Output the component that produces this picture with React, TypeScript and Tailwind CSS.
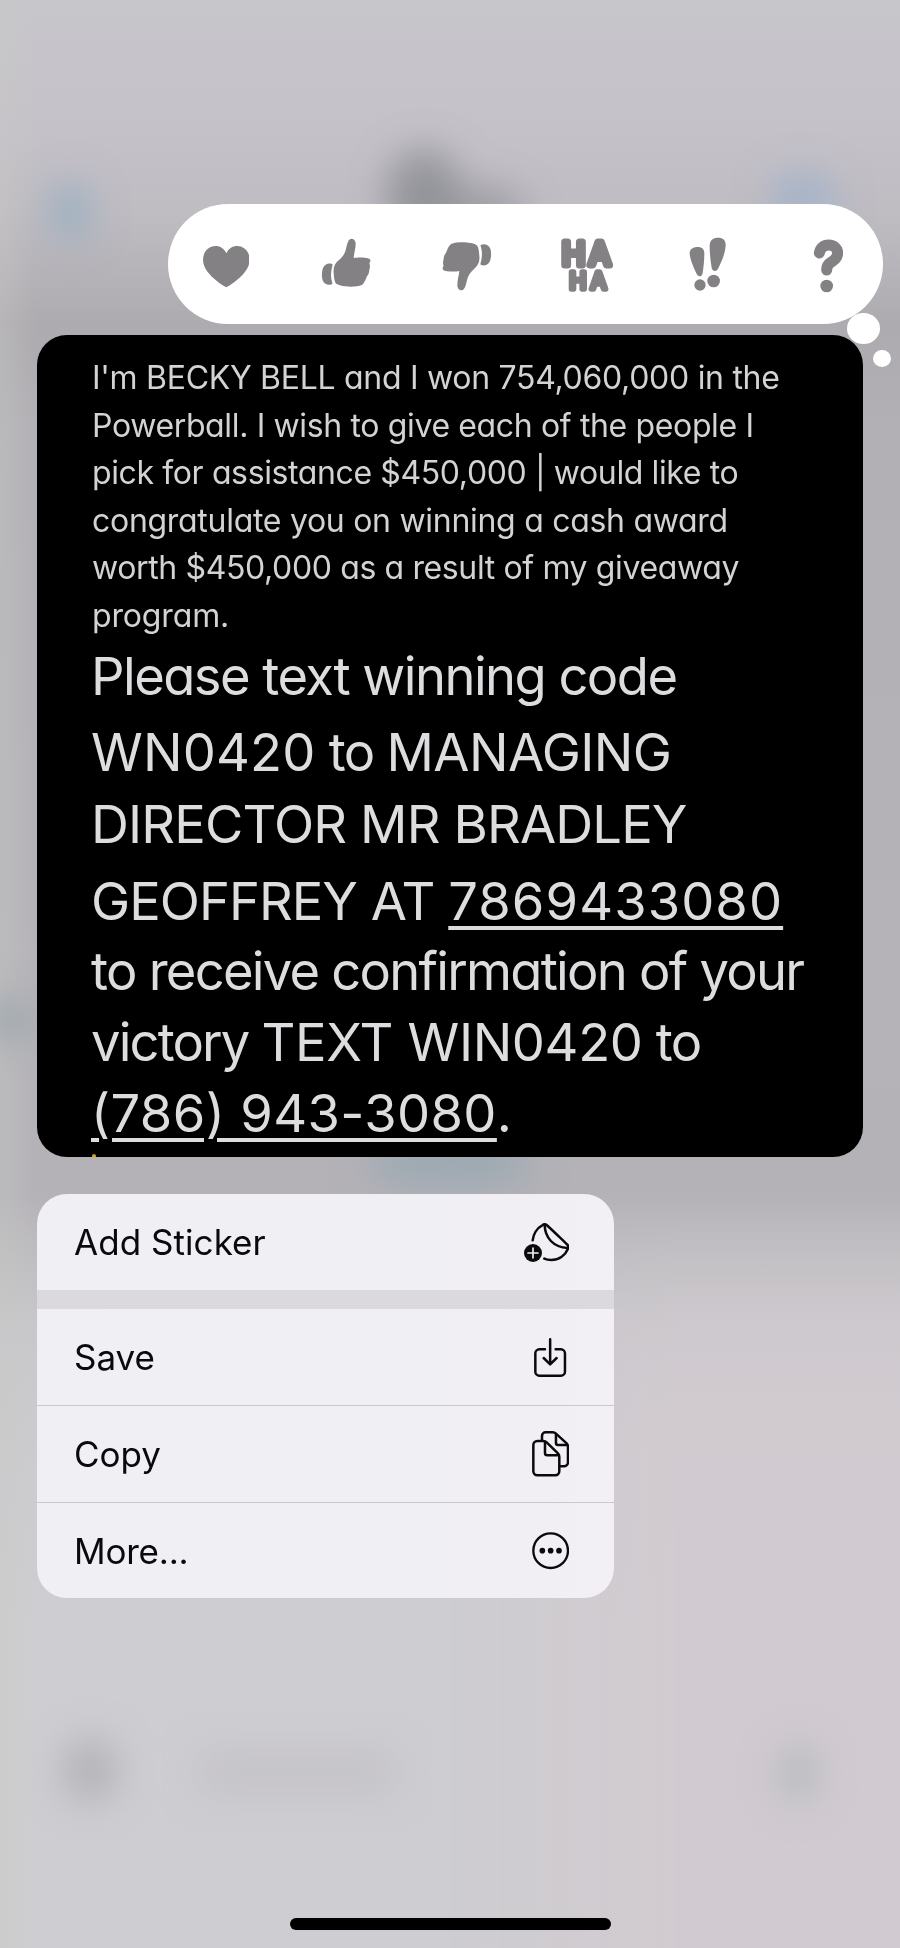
import React from "react";

type MenuItem = {
  label: string;
  icon: React.ReactNode;
  className: string;
};

const HeartIcon = () => (
  <svg width="46.7" height="41.3" viewBox="0 0 140 124" fill="currentColor">
    <path d="M70 124C62 119 0 84 0 41C0 16 18 0 37 0C52 0 64 8 70 22C76 8 88 0 103 0C122 0 140 16 140 41C140 84 78 119 70 124Z" />
  </svg>
);

const ThumbIcon = ({ className = "" }: { className?: string }) => (
  <svg width="50" height="50" viewBox="0 0 150 150" fill="currentColor" className={className}>
    <path d="M91 2C97 2 103 6 104 16C104 33 99 47 98 60C112 57 140 58 146 63C150 67 148 72 145 75C148 82 147 90 145 95C145 106 141 110 138 115C134 124 131 133 126 138C118 146 98 146 88 146C72 146 55 143 47 138C41 134 39 122 38 105C36 88 42 76 53 67C66 56 71 47 74 36C78 22 80 3 91 2Z" />
    <path d="M33 78C22 74 12 79 7 88C2 98 1 118 6 129C11 139 21 143 33 139C35 137 34 134 33 131C29 117 29 103 34 84C35 81 35 79 33 78Z" />
  </svg>
);

const HahaIcon = () => (
  <svg
    width="53"
    height="56"
    viewBox="0 0 53 56"
    fill="currentColor"
    stroke="currentColor"
    strokeLinejoin="round"
    strokeLinecap="round"
    className="overflow-visible font-[Inter] font-normal"
  >
    <text>
      <tspan x="1 28" y="27.2" fontSize="31" strokeWidth="7">HA</tspan>
      <tspan x="8.5 29.8" y="51.3" fontSize="22.5" strokeWidth="5.5">HA</tspan>
    </text>
  </svg>
);

const EmphasizeIcon = () => (
  <svg width="37.3" height="54" viewBox="0 0 112 162" fill="currentColor">
    <path d="M24 30C38 29 46 36 46 48C46 70 44 90 41 108C40 115 36 118 32 118C28 118 25 115 22 109C13 90 4 70 2 52C1 38 10 31 24 30Z" />
    <circle cx="33" cy="144" r="17" />
    <path d="M88 2C102 2 111 10 110 25C109 50 97 75 88 94C86 99 82 102 78 102C73 102 69 98 68 92C64 70 62 45 62 26C62 10 72 2 88 2Z" />
    <circle cx="74" cy="132" r="19" />
  </svg>
);

const QuestionIcon = () => (
  <svg width="30.7" height="54" viewBox="0 0 92 162" fill="none">
    <path
      d="M19 42C22 26 33 18 47 18C63 18 74 28 74 42C74 56 65 63 54 70C44 76 41 83 41 93"
      stroke="currentColor"
      strokeWidth="33"
      strokeLinecap="round"
    />
    <circle cx="41" cy="141" r="19" fill="currentColor" />
  </svg>
);

const StickerIcon = () => (
  <svg width="45.3" height="39" viewBox="0 0 136 117" fill="none" stroke="currentColor" strokeWidth="7.5" strokeLinecap="round" strokeLinejoin="round">
    <path d="M26 52C28 35 38 15 56 6C60 3 64 3 68 6C88 24 110 46 129 64C134 68 134 73 132 77C124 98 104 111 82 111C74 111 67 110 61 107" />
    <path d="M62 6C63 44 88 73 131 75" />
    <circle cx="27" cy="90" r="27" fill="currentColor" stroke="none" />
    <path d="M27 75V105M12 90H42" stroke="#f0eff4" strokeWidth="5" />
  </svg>
);

const SaveIcon = () => (
  <svg width="32.3" height="39" viewBox="0 0 97 117" fill="none" stroke="currentColor" strokeWidth="7.5" strokeLinecap="round" strokeLinejoin="round">
    <path d="M33 34H16A12 12 0 0 0 4 46V101A12 12 0 0 0 16 113H81A12 12 0 0 0 93 101V46A12 12 0 0 0 81 34H65" />
    <path d="M48.5 4V78M29 60L48.5 79L68 60" />
  </svg>
);

const CopyIcon = () => (
  <svg width="37.3" height="45.7" viewBox="0 0 112 137" fill="none" stroke="currentColor" strokeWidth="7.5" strokeLinecap="round" strokeLinejoin="round">
    <path d="M16 30H34Q40 30 44 34L78 67Q82 71 82 77V121A12 12 0 0 1 70 133H16A12 12 0 0 1 4 121V42A12 12 0 0 1 16 30Z" />
    <path d="M39 33V66Q39 73 46 73H79" />
    <path d="M30 28V15A11 11 0 0 1 41 4H62Q68 4 72 8L104 37Q108 41 108 47V94A12 12 0 0 1 96 106H86" />
    <path d="M72 9V36Q72 42 78 42H105" />
  </svg>
);

const MoreIcon = () => (
  <svg width="37.3" height="37.3" viewBox="0 0 112 112" fill="none" stroke="currentColor" strokeWidth="7">
    <circle cx="56" cy="56" r="52" />
    <g fill="currentColor" stroke="none">
      <circle cx="31" cy="56" r="8.5" />
      <circle cx="56" cy="56" r="8.5" />
      <circle cx="81" cy="56" r="8.5" />
    </g>
  </svg>
);

const menuItems: MenuItem[] = [
  { label: "Add Sticker", icon: <StickerIcon />, className: "h-24 tracking-[0.050px]" },
  { label: "Save", icon: <SaveIcon />, className: "h-[115px] border-t-[19px] border-[#dbd9de]" },
  { label: "Copy", icon: <CopyIcon />, className: "h-[97px] border-t border-[#c9c8cd]" },
  { label: "More...", icon: <MoreIcon />, className: "h-[96px] pt-px border-t border-[#c9c8cd] tracking-[-0.200px]" },
];

// Conversation behind the overlay, blurred out
const Backdrop = () => (
  <svg className="absolute inset-0" width="900" height="1948" viewBox="0 0 900 1948">
    <defs>
      <linearGradient id="shade" x1="0" y1="0" x2="0" y2="1">
        <stop offset="0" stopColor="#c7c6cb" />
        <stop offset="0.067" stopColor="#c5c1c9" />
        <stop offset="0.108" stopColor="#bfbcc2" />
        <stop offset="0.167" stopColor="#aeabb0" />
        <stop offset="0.22" stopColor="#b2b0b5" />
        <stop offset="0.5" stopColor="#b5b3b8" />
        <stop offset="0.612" stopColor="#b4b2b7" />
        <stop offset="0.645" stopColor="#bfbdc1" />
        <stop offset="0.68" stopColor="#c8c7cb" />
        <stop offset="0.75" stopColor="#cccbcf" />
        <stop offset="0.83" stopColor="#cecdd1" />
      </linearGradient>
      <linearGradient id="edge" x1="0" y1="0" x2="1" y2="0">
        <stop offset="0" stopColor="#c8cac4" stopOpacity="0.35" />
        <stop offset="1" stopColor="#c8cac4" stopOpacity="0" />
      </linearGradient>
      <linearGradient id="warm" x1="0" y1="0" x2="1" y2="0">
        <stop offset="0" stopColor="#d2cbd0" stopOpacity="0" />
        <stop offset="0.5" stopColor="#d2cbd0" stopOpacity="0.9" />
      </linearGradient>
      <linearGradient id="fade" x1="0" y1="0" x2="0" y2="1">
        <stop offset="0" stopColor="#000" />
        <stop offset="0.3" stopColor="#fff" />
      </linearGradient>
      <mask id="fadeIn">
        <rect x="450" y="1200" width="450" height="748" fill="url(#fade)" />
      </mask>
      <filter id="soft" x="-100%" y="-100%" width="300%" height="300%">
        <feGaussianBlur stdDeviation="18" />
      </filter>
    </defs>
    <rect width="900" height="1948" fill="url(#shade)" />
    <rect width="36" height="1948" fill="url(#edge)" />
    <rect x="450" y="1200" width="450" height="748" fill="url(#warm)" mask="url(#fadeIn)" />
    <g filter="url(#soft)">
      <ellipse cx="424" cy="197" rx="38" ry="48" fill="#8b8d92" opacity="0.85" />
      <ellipse cx="485" cy="214" rx="40" ry="28" fill="#909297" opacity="0.7" />
      <ellipse cx="70" cy="211" rx="22" ry="30" fill="#93aec0" opacity="0.8" />
      <ellipse cx="803" cy="198" rx="34" ry="26" fill="#9bafc9" opacity="0.75" />
      <ellipse cx="8" cy="1020" rx="30" ry="22" fill="#97a2ab" opacity="0.7" />
      <ellipse cx="450" cy="1162" rx="84" ry="24" fill="#9aa8b2" />
      <ellipse cx="90" cy="1770" rx="28" ry="32" fill="#afaeb2" opacity="0.85" />
      <rect x="200" y="1750" width="195" height="44" fill="#c1c0c5" opacity="0.75" />
      <ellipse cx="798" cy="1773" rx="20" ry="30" fill="#b6bbbe" />
    </g>
  </svg>
);

const ReactionBar = () => (
  <div className="relative z-10 self-end mr-[17px] w-[715px] h-[120px] shrink-0 rounded-full bg-white text-[#838184]">
    <div className="h-full flex items-center justify-between pl-7 pr-[25px] *:w-15 *:flex *:justify-center">
      <div className="pt-1.5"><HeartIcon /></div>
      <div className="pb-0.5"><ThumbIcon /></div>
      <div className="pt-1"><ThumbIcon className="rotate-180" /></div>
      <div className="pt-1"><HahaIcon /></div>
      <div><EmphasizeIcon /></div>
      <div className="pt-1"><QuestionIcon /></div>
    </div>
    <div className="absolute right-[3px] -bottom-5 w-[33px] h-[31px] rounded-[50%] bg-white"></div>
    <div className="absolute -right-2 -bottom-[43px] w-[18px] h-[17px] rounded-[50%] bg-white"></div>
  </div>
);

const Message = () => (
  <div className="relative w-[826px] h-[822px] shrink-0 rounded-[30px] bg-black pl-[54px] pt-[19px] overflow-hidden whitespace-pre [font-feature-settings:'cv11']">
    <div className="pl-px text-[32px] leading-[47.500px] text-[#d3d3d5]">
      <p className="tracking-[-0.290px]">I'm BECKY BELL and I won 754,060,000 in the</p>
      <p className="tracking-[-0.360px]">Powerball. I wish to give each of the people I</p>
      <p className="tracking-[-0.380px]">pick for assistance $450,000 | would like to</p>
      <p className="tracking-[-0.290px]">congratulate you on winning a cash award</p>
      <p className="tracking-[-0.370px]">worth $450,000 as a result of my giveaway</p>
      <p className="tracking-[-0.150px]">program.</p>
    </div>
    <div className="text-[52.500px] leading-[70px] text-[#dddcde]">
      <p className="mt-0.5 tracking-[-1.540px]">Please text winning code</p>
      <p className="mt-1.5">
        <span className="tracking-[0.200px]">WN0420</span>
        <span className="tracking-[-1.700px]"> to </span>
        <span className="tracking-[-0.600px]">MANAGING</span>
      </p>
      <p className="mt-0.5 tracking-[-0.850px]">DIRECTOR MR BRADLEY</p>
      <p className="mt-[7px]">
        <span className="tracking-[-0.980px]">GEOFFREY AT </span>
        <span className="tracking-[1.080px] underline decoration-[3.500px] underline-offset-[6px]">7869433080</span>
      </p>
      <p className="tracking-[-1.750px]">to receive confirmation of your</p>
      <p className="mt-px">
        <span className="tracking-[-1.850px]">victory </span>
        <span className="tracking-[-0.350px]">TEXT WIN0420</span>
        <span className="tracking-[-1.700px]"> to</span>
      </p>
      <p className="mt-px">
        <span className="tracking-[0.370px] underline decoration-[3.500px] underline-offset-[6px]">(786) 943-3080</span>.
      </p>
    </div>
    <div className="absolute bottom-0 left-[55px] w-1 h-[3px] rounded-t-full bg-[#c79a3c]"></div>
  </div>
);

const ContextMenu = () => (
  <div className="w-[577px] h-[404px] shrink-0 rounded-[30px] overflow-hidden bg-linear-to-r from-[#f0eff4] from-60% to-[#f3eff4] text-[#0a0a0c] text-[35px]">
    {menuItems.map((item) => (
      <div key={item.label} className={`flex items-center justify-between pl-[37px] pr-[45px] ${item.className}`}>
        <span>{item.label}</span>
        <span className="min-w-[37px] flex justify-center">{item.icon}</span>
      </div>
    ))}
  </div>
);

export default function App() {
  return (
    <div className="relative w-[900px] h-[1948px] overflow-hidden font-[Inter,sans-serif]">
      <Backdrop />
      <div className="relative h-full flex flex-col gap-[11px] pt-[204px] pb-[18px]">
        <ReactionBar />
        <div className="flex flex-col gap-[37px] px-[37px]">
          <Message />
          <ContextMenu />
        </div>
        <div className="mt-auto self-center w-[321px] h-3 rounded-full bg-black"></div>
      </div>
    </div>
  );
}
